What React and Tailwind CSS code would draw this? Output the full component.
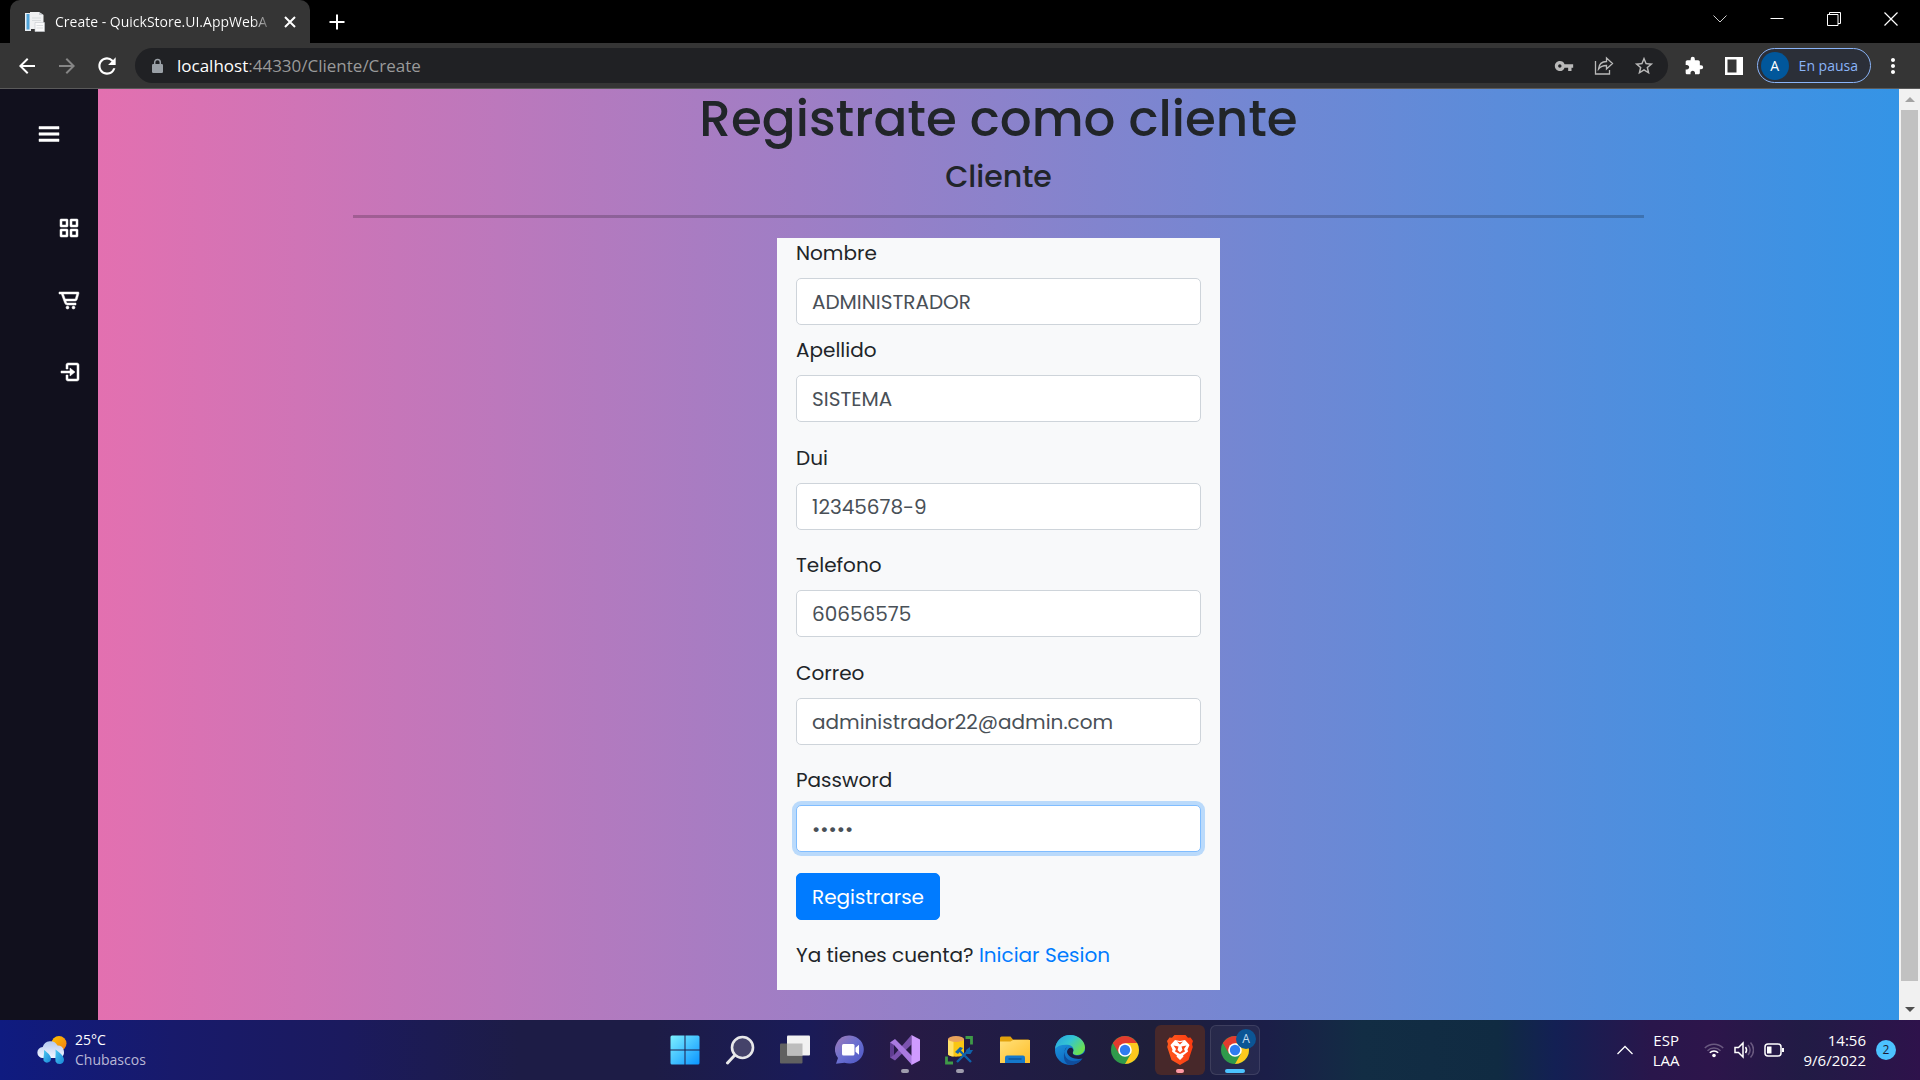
import React from "react";
import { BiMenu, BiGridAlt, BiCartAlt, BiLogIn } from "react-icons/bi";
import {
  MdArrowBack,
  MdArrowForward,
  MdRefresh,
  MdVpnKey,
  MdStarBorder,
  MdExtension,
  MdMoreVert,
} from "react-icons/md";

const SYSTEM_FONT = "font-['Segoe_UI','Open_Sans',sans-serif]";
const PAGE_FONT = "font-['Poppins','Inter',sans-serif]";

/* ---------- Browser chrome ---------- */

function PageFavicon() {
  return (
    <svg viewBox="0 0 20 20" className="size-5 shrink-0" aria-hidden="true">
      <path d="M0 1h6v18H0z" fill="#e8eef3" />
      <path d="M1.500 2h3v15.500h-3z" fill="#4fa3d8" />
      <path d="M5 0h9l4.500 3v14H5z" fill="#f0f1f2" />
      <path d="M14 0v3h4.500z" fill="#c9cdd1" />
      <path d="M10 10.500h9.500v9H10z" fill="#fafafa" stroke="#c4c8cc" strokeWidth=".6" />
      <path d="M11.500 13.500h6.500M11.500 16h6.500M7 6h9M7 8.500h9" stroke="#cfd3d6" strokeWidth=".7" />
    </svg>
  );
}

function TitleBar() {
  return (
    <div className="flex h-[43px] justify-between bg-black pl-2.5">
      <div className="flex">
        <div className="flex w-[300px] items-center rounded-t-[10px] bg-[#353535] pr-2 pl-[15px] text-white">
          <PageFavicon />
          <span className="ml-2.5 min-w-0 flex-1 overflow-hidden bg-linear-to-r from-white from-90% to-transparent bg-clip-text text-sm whitespace-nowrap text-transparent">
            Create - QuickStore.UI.AppWebA
          </span>
          <button type="button" aria-label="Cerrar pestaña" className="ml-1 grid size-6 place-items-center">
            <svg viewBox="0 0 12 12" className="size-3" stroke="currentColor" strokeWidth="2">
              <path d="m1 1 10 10M11 1 1 11" />
            </svg>
          </button>
        </div>
        <button type="button" aria-label="Nueva pestaña" className="ml-[11px] grid w-8 place-items-center text-white">
          <svg viewBox="0 0 16 16" className="size-4" stroke="currentColor" strokeWidth="2">
            <path d="M8 .5v15M.5 8h15" />
          </svg>
        </button>
      </div>
      <div className="flex h-[37px] text-white">
        <button type="button" aria-label="Buscar pestañas" className="grid w-[57px] place-items-center">
          <svg viewBox="0 0 14 8" className="h-2 w-3.5" fill="none" stroke="#ccc">
            <path d="M.5.5 7 7 13.500.5" />
          </svg>
        </button>
        <button type="button" aria-label="Minimizar" className="grid w-[57px] place-items-center">
          <svg viewBox="0 0 14 14" className="size-3.5" stroke="currentColor">
            <path d="M.5 6.500h13" />
          </svg>
        </button>
        <button type="button" aria-label="Restaurar" className="grid w-[57px] place-items-center">
          <svg viewBox="0 0 14 14" className="size-3.5" fill="none" stroke="currentColor">
            <path d="M.5 2.500h10.500v11H.5zM2.500 2.500v-2h11v11H11" />
          </svg>
        </button>
        <button type="button" aria-label="Cerrar" className="grid w-[58px] place-items-center">
          <svg viewBox="0 0 14 14" className="size-3.5" fill="none" stroke="currentColor" strokeWidth="1.200">
            <path d="m.5.5 13 13M13.500.5l-13 13" />
          </svg>
        </button>
      </div>
    </div>
  );
}

function Toolbar() {
  return (
    <div className="flex h-[46px] items-center border-b border-[#5a5a5a] bg-[#353535] pr-[15px] pl-[7px]">
      <button type="button" aria-label="Atrás" className="grid size-10 place-items-center text-white">
        <MdArrowBack className="size-6" />
      </button>
      <button type="button" aria-label="Adelante" className="grid size-10 place-items-center text-[#868686]">
        <MdArrowForward className="size-6" />
      </button>
      <button type="button" aria-label="Recargar" className="grid size-10 place-items-center text-white">
        <MdRefresh className="size-[26px]" />
      </button>
      <div className="ml-2 flex h-[35px] flex-1 items-center rounded-full bg-[#202124] pr-1 pl-3.5 text-[#b9b9b9]">
        <svg viewBox="0 0 16 16" className="mr-3 size-4" aria-hidden="true">
          <rect x="3" y="6" width="11" height="9" rx="1.200" fill="#9aa0a6" />
          <path d="M5.700 6.500V4.300a2.800 2.800 0 0 1 5.600 0v2.200" fill="none" stroke="#9aa0a6" strokeWidth="1.500" />
        </svg>
        <div className="flex-1 text-[17px] text-[#9a9a9a]">
          <span className="text-white">localhost</span>:44330/Cliente/Create
        </div>
        <button type="button" aria-label="Contraseñas" className="grid size-10 place-items-center">
          <MdVpnKey className="size-5" />
        </button>
        <button type="button" aria-label="Compartir" className="grid size-10 place-items-center">
          <svg viewBox="0 0 20 20" className="size-5" fill="none" stroke="currentColor" strokeWidth="1.300">
            <path d="M1.500 5v13h14v-4M4.500 13c.5-4.500 3-7.500 8-7.500V2l6 5.500-6 5.500V9.500C9 9.500 6.500 10.500 4.500 13z" />
          </svg>
        </button>
        <button type="button" aria-label="Añadir a marcadores" className="grid size-10 place-items-center">
          <MdStarBorder className="size-[22px]" />
        </button>
      </div>
      <div className="ml-1.5 flex items-center text-white">
        <button type="button" aria-label="Extensiones" className="grid size-10 place-items-center">
          <MdExtension className="size-5" />
        </button>
        <button type="button" aria-label="Panel lateral" className="grid size-10 place-items-center">
          <svg viewBox="0 0 18 18" className="size-[18px]" fill="currentColor">
            <path fillRule="evenodd" d="M0 0h18v18H0zM2.500 2.500v13h9v-13z" />
          </svg>
        </button>
        <button
          type="button"
          className="ml-[3px] flex h-[35px] items-center rounded-full border border-[#8ab4f8] bg-[#2b2f38] pr-3 pl-[3px] text-sm text-[#8ab4f8]"
        >
          <span className="mr-2.5 grid size-7 place-items-center rounded-full bg-[#01579b] text-white">A</span>
          En pausa
        </button>
        <button type="button" aria-label="Menú" className="ml-2.5 grid w-6 place-items-center">
          <MdMoreVert className="size-6" />
        </button>
      </div>
    </div>
  );
}

/* ---------- Page ---------- */

const NAV_ITEMS = [
  { label: "Inicio", Icon: BiGridAlt },
  { label: "Carrito", Icon: BiCartAlt },
  { label: "Iniciar sesión", Icon: BiLogIn },
];

function Sidebar() {
  return (
    <nav className="flex w-[98px] shrink-0 flex-col bg-[#11101d] text-white">
      <button type="button" aria-label="Abrir menú" className="grid h-[90px] place-items-center">
        <BiMenu className="size-[30px]" stroke="currentColor" strokeWidth=".4" />
      </button>
      <ul className="mt-[13px]">
        {NAV_ITEMS.map(({ label, Icon }) => (
          <li key={label}>
            <a href="#" aria-label={label} className="flex h-[72px] items-center justify-end pr-[17px]">
              <Icon className="size-6" stroke="currentColor" strokeWidth=".5" />
            </a>
          </li>
        ))}
      </ul>
    </nav>
  );
}

const FIELDS = [
  { id: "nombre", label: "Nombre", type: "text", value: "ADMINISTRADOR", gap: "mb-2.5" },
  { id: "apellido", label: "Apellido", type: "text", value: "SISTEMA", gap: "mb-[21px]" },
  { id: "dui", label: "Dui", type: "text", value: "12345678-9", gap: "mb-5" },
  { id: "telefono", label: "Telefono", type: "text", value: "60656575", gap: "mb-[21px]" },
  { id: "correo", label: "Correo", type: "text", value: "administrador22@admin.com", gap: "mb-5" },
  { id: "password", label: "Password", type: "password", value: "admin", gap: "mb-[21px]", active: true },
];

function Field({ id, label, type, value, gap, active }) {
  return (
    <div className={gap}>
      <label htmlFor={id} className="mb-2.5 block leading-[30px]">
        {label}
      </label>
      <input
        id={id}
        type={type}
        defaultValue={value}
        className={
          "block h-[47px] w-full rounded-[5px] border bg-white px-[15px] text-[#495057] outline-none " +
          (active ? "border-[#80bdff] ring-4 ring-[#007bff]/25" : "border-[#ced4da]")
        }
      />
    </div>
  );
}

function RegisterPage() {
  return (
    <main
      className={"min-w-0 flex-1 bg-linear-to-r/srgb from-[#e370b0] to-[#3494e6] text-xl text-[#212529] " + PAGE_FONT}
    >
      <div className="mx-auto w-full max-w-[1291px] text-center">
        <h1 className="mb-2.5 text-[50px] leading-[60px] font-medium">Registrate como cliente</h1>
        <h4 className="text-[30px] leading-9 font-medium">Cliente</h4>
        <hr className="my-5 border-t-[3px] border-black/20" />
      </div>
      <form className="mx-auto w-full max-w-[443px] bg-[#f8f9fa] px-[19px] pb-5" onSubmit={(e) => e.preventDefault()}>
        {FIELDS.map((field) => (
          <Field key={field.id} {...field} />
        ))}
        <button
          type="submit"
          className="h-[47px] rounded-[5px] border border-[#007bff] bg-[#007bff] px-[15px] text-white"
        >
          Registrarse
        </button>
        <p className="mt-5 leading-[30px]">
          Ya tienes cuenta?{" "}
          <a href="#" className="text-[#007bff]">
            Iniciar Sesion
          </a>
        </p>
      </form>
    </main>
  );
}

function ScrollBar() {
  return (
    <div className="flex w-[21px] shrink-0 flex-col bg-[#f1f1f1]" aria-hidden="true">
      <div className="grid h-[21px] place-items-center">
        <svg viewBox="0 0 10 5" className="h-[5px] w-2.5" fill="#a3a3a3">
          <path d="M0 5 5 0l5 5z" />
        </svg>
      </div>
      <div className="mx-0.5 mb-[18px] flex-1 bg-[#c1c1c1]" />
      <div className="grid h-[21px] place-items-center">
        <svg viewBox="0 0 10 5" className="h-[5px] w-2.5" fill="#505050">
          <path d="M0 0h10L5 5z" />
        </svg>
      </div>
    </div>
  );
}

/* ---------- Taskbar icons ---------- */

function WeatherIcon() {
  return (
    <svg viewBox="0 0 30 30" className="size-[30px]" aria-hidden="true">
      <defs>
        <linearGradient id="sun" x1="0" y1="0" x2="1" y2="1">
          <stop offset="0" stopColor="#ffc400" />
          <stop offset="1" stopColor="#f27a12" />
        </linearGradient>
        <linearGradient id="cloud" x1="0" y1="0" x2="0" y2="1">
          <stop offset="0" stopColor="#b4c9f0" />
          <stop offset="1" stopColor="#f3f7ff" />
        </linearGradient>
        <linearGradient id="drop" x1="0" y1="0" x2="1" y2="1">
          <stop offset="0" stopColor="#4cc9f0" />
          <stop offset="1" stopColor="#1887d8" />
        </linearGradient>
      </defs>
      <circle cx="22" cy="8.500" r="7.500" fill="url(#sun)" />
      <path d="M6 23a5.500 5.500 0 0 1-.3-11A8 8 0 0 1 20.500 10.500a6.500 6.500 0 0 1 2.500 12.500z" fill="url(#cloud)" />
      <path d="M7 15c4 3 7 5.500 7 9a4 4 0 0 1-7.500 1.500C6 22 7.500 19 7 15z" fill="url(#drop)" />
      <path d="M18.500 14.500c4.500 3.500 8.500 6.500 8.500 10.500a4.500 4.500 0 0 1-8.500 1.500c-.5-4 .5-8 0-12z" fill="url(#drop)" />
    </svg>
  );
}

function WindowsIcon() {
  return (
    <svg viewBox="0 0 30 30" className="size-[30px]">
      <defs>
        <linearGradient id="win" x1="0" y1="0" x2="1" y2="1">
          <stop offset="0" stopColor="#7df0ff" />
          <stop offset="1" stopColor="#0a94ff" />
        </linearGradient>
      </defs>
      <path
        fill="url(#win)"
        d="M2 .5h12.500V14.500H.5V2A1.500 1.500 0 0 1 2 .5zM15.500.5H28A1.500 1.500 0 0 1 29.500 2v12.500h-14zM.5 15.500h14v14H2A1.500 1.500 0 0 1 .5 28zM15.500 15.500h14V28a1.500 1.500 0 0 1-1.500 1.500H15.500z"
      />
    </svg>
  );
}

function SearchIcon() {
  return (
    <svg viewBox="0 0 30 30" className="size-[30px]" stroke="#e8e8ea" fill="none" strokeLinecap="round">
      <path d="m9.500 20.500-7 7.500" strokeWidth="3" />
      <circle cx="17.500" cy="12.500" r="10.500" strokeWidth="2.600" fill="#45436a" />
    </svg>
  );
}

function TaskViewIcon() {
  return (
    <svg viewBox="0 0 30 30" className="size-[30px]">
      <rect x="0" y="8.500" width="22.500" height="20" rx="1" fill="#616161" />
      <rect x="7" y=".5" width="23" height="20" rx="1" fill="#f2f2f2" />
      <path d="M7 8.500h15.500v12H7z" fill="#bdbdbd" />
    </svg>
  );
}

function ChatIcon() {
  return (
    <svg viewBox="0 0 30 30" className="size-[30px]">
      <defs>
        <linearGradient id="chat" x1="0" y1="0" x2="1" y2="1">
          <stop offset="0" stopColor="#a07ab5" />
          <stop offset=".5" stopColor="#6a6fd0" />
          <stop offset="1" stopColor="#4b55c4" />
        </linearGradient>
      </defs>
      <path d="M15 .5a14.500 14 0 1 1-5.500 27.200L1 28.700l2-5.700A14 14 0 0 1 15 .5z" fill="url(#chat)" />
      <rect x="7" y="9" width="12.500" height="11.500" rx="1.500" fill="#fff" />
      <path d="m20.500 12.800 3.500-3v10l-3.500-3z" fill="#fff" />
    </svg>
  );
}

function VisualStudioIcon() {
  return (
    <svg viewBox="0 0 30 30" className="size-[30px]">
      <path d="M0 7.500v15L4 21V9z" fill="#5f3c91" />
      <path d="M0 22.500 5 25.500 21.500 9.500V0L4 20z" fill="#7b52ae" />
      <path d="M0 7.500 5 4l17 17v9L4 10z" fill="#a97ae0" />
      <path d="M21.500 0 30 4.500v21L21.500 30z" fill="#cf9bff" />
    </svg>
  );
}

function SqlIcon() {
  return (
    <svg viewBox="0 0 30 30" className="size-[30px]">
      <path d="M3 4v15c0 3.500 16 3.500 16 0V4z" fill="#f9c613" />
      <path d="M3 4v15c0 1.300 2.500 2.200 5.500 2.500V5z" fill="#ffe06a" />
      <ellipse cx="11" cy="4" rx="8" ry="3" fill="#e8a25c" />
      <path d="M20.500 2.500h6v7M1.500 21.500v6.500H8" fill="none" stroke="#3f9a48" strokeWidth="2.800" />
      <path d="m12 27 12-12M26 27 14 15" stroke="#0f62ab" strokeWidth="2.400" fill="none" />
      <path d="m10 17 5-5 3 1-5 6zM21 15l4-3v3l3 0-2.500 4-3.500 0z" fill="#0f62ab" />
    </svg>
  );
}

function FolderIcon() {
  return (
    <svg viewBox="0 0 30 30" className="size-[30px]">
      <defs>
        <linearGradient id="folder" x1="0" y1="0" x2="1" y2="1">
          <stop offset="0" stopColor="#ffe07a" />
          <stop offset="1" stopColor="#ffbe28" />
        </linearGradient>
      </defs>
      <path d="M0 3a1.500 1.500 0 0 1 1.500-1.500h9L13 4.500h15A1.500 1.500 0 0 1 29.500 6v4H0z" fill="#e2a20c" />
      <path d="M0 6.500h10.500l2.500-1.500h17v23H0z" fill="url(#folder)" />
      <path d="M5 28v-5.500a2 2 0 0 1 2-2h16a2 2 0 0 1 2 2V28z" fill="#1578cc" />
      <path d="M8.500 24h13" stroke="#0b4f93" strokeWidth="1.300" />
    </svg>
  );
}

function EdgeIcon() {
  return (
    <svg viewBox="0 0 30 30" className="size-[30px]">
      <defs>
        <linearGradient id="edge-top" x1="0" y1="0" x2="1" y2=".6">
          <stop offset="0" stopColor="#2a9fe0" />
          <stop offset=".5" stopColor="#33c5d4" />
          <stop offset="1" stopColor="#6ce04e" />
        </linearGradient>
        <linearGradient id="edge-body" x1="0" y1="0" x2=".6" y2="1">
          <stop offset="0" stopColor="#1fa0e4" />
          <stop offset="1" stopColor="#0d62bd" />
        </linearGradient>
      </defs>
      <circle cx="15" cy="15" r="15" fill="url(#edge-body)" />
      <path d="M0 14C1 5.500 7.500 0 15 0c8.500 0 15 6 15 12.500 0 4.500-3.500 7.500-7.500 7.500-3.500 0-5.500-1.300-4.500-3 1.800-3.500-1-7-5.500-7.200C6.500 9.500 2 11 0 14z" fill="url(#edge-top)" />
      <path d="M12 12c-4.500 3-2.500 11.500 3 13.500 4.500 1.500 9 .5 12.500-2C24 28.500 19 30 15 30 8 29 7 18 12 12z" fill="#104d9c" />
      <path d="M18 17c-1 2 1.500 4 5.500 3.500 3.500-.5 6-2.500 6.500-4.500V23l-2.300.5C22 25 13 23 12 17c0-3 4-6 6-3 .5 1 .5 2 0 3z" fill="#1d1c42" />
    </svg>
  );
}

function ChromeIcon() {
  return (
    <svg viewBox="0 0 28 28" className="size-7">
      <circle cx="14" cy="14" r="14" fill="#2f9a4b" />
      <path d="M14 14 1.880 7A14 14 0 0 1 26.120 7z" fill="#e33b2e" />
      <path d="M14 7h12.120A14 14 0 0 1 14 28l6-10.500z" fill="#fdc81e" />
      <path d="M1.880 7 8 17.500 14 7z" fill="#e33b2e" />
      <circle cx="14" cy="14" r="6.800" fill="#fff" />
      <circle cx="14" cy="14" r="5.200" fill="#2e7cf0" />
    </svg>
  );
}

function BraveIcon() {
  return (
    <svg viewBox="0 0 26 30" className="h-[30px] w-[26px]">
      <defs>
        <linearGradient id="brave" x1="0" y1="0" x2="1" y2="0">
          <stop offset="0" stopColor="#ff5a1f" />
          <stop offset="1" stopColor="#fb3a10" />
        </linearGradient>
      </defs>
      <path d="M7.500 0h11l2.500 2.800 2.500-.3L26 6l-1 3 .8 3-4.300 13L13 30l-8.500-5L.2 12 1 9 0 6l2.500-3.500 2.500.3z" fill="url(#brave)" />
      <path d="m8 5 5 1 5-1 4.500 5-2 4.500.5 2-5 4 .5 1L13 25l-3.500-3.500.5-1-5-4 .5-2L3.500 10z" fill="#fff" />
      <path d="m6.500 10.500 5 1-1 3.500 2.500 2.500 2.500-2.500-1-3.500 5-1-2.500 3.500 1 2.500-3 1.500-2 1-2-1-3-1.500 1-2.500zM10 6.500l3 3 3-3-3 .8z" fill="#f9481a" />
    </svg>
  );
}

const TASKBAR_APPS = [
  { label: "Inicio", Icon: WindowsIcon },
  { label: "Buscar", Icon: SearchIcon },
  { label: "Vista de tareas", Icon: TaskViewIcon },
  { label: "Chat", Icon: ChatIcon },
  { label: "Visual Studio", Icon: VisualStudioIcon, marker: "w-2 bg-[#9f9cad]" },
  { label: "SQL Server Management Studio", Icon: SqlIcon, marker: "w-2 bg-[#9f9cad]" },
  { label: "Explorador de archivos", Icon: FolderIcon },
  { label: "Microsoft Edge", Icon: EdgeIcon },
  { label: "Google Chrome", Icon: ChromeIcon },
  { label: "Brave", Icon: BraveIcon, tile: "bg-[#47282a]", marker: "w-2 bg-[#ff99a4]" },
  {
    label: "Google Chrome: A",
    Icon: ChromeIcon,
    tile: "bg-white/5 ring-1 ring-inset ring-white/10",
    marker: "w-5 bg-[#4cc2ff]",
    badge: "A",
  },
];

function Taskbar() {
  return (
    <footer
      className={
        "grid h-[60px] grid-cols-[1fr_auto_1fr] items-center bg-[linear-gradient(90deg,#0f1b80_0%,#181a6b_9%,#1b1a5e_18%,#1d1c46_27%,#1d1c46_34%,#1a1b58_42%,#271a45_47%,#201c44_53%,#1e1e3a_60%,#1b1e48_66%,#122d44_71%,#102b42_78%,#132054_81%,#29164b_86%,#2d154b_89%,#211b45_94%,#2e124b_100%)] text-white " +
        SYSTEM_FONT
      }
    >
      <button type="button" className="flex items-center gap-2 justify-self-start pl-[37px] text-left text-sm leading-5">
        <WeatherIcon />
        <span>
          25°C
          <span className="block text-[#b9b8d6]">Chubascos</span>
        </span>
      </button>
      <div className="flex gap-[5px]">
        {TASKBAR_APPS.map(({ label, Icon, tile = "", marker, badge }) => (
          <button
            key={label}
            type="button"
            aria-label={label}
            className={"relative grid size-[50px] place-items-center rounded-md " + tile}
          >
            <Icon />
            {badge && (
              <span className="absolute top-1 right-1 grid size-5 place-items-center rounded-full bg-[#0b5595] text-xs text-[#c4dcf0]">
                {badge}
              </span>
            )}
            {marker && <span className={"absolute bottom-0.5 h-1 rounded-full " + marker} />}
          </button>
        ))}
      </div>
      <div className="flex items-center justify-self-end pr-6 text-[15px] leading-5">
        <button type="button" aria-label="Mostrar iconos ocultos" className="mr-5">
          <svg viewBox="0 0 16 10" className="h-2.5 w-4" fill="none" stroke="currentColor" strokeWidth="1.300">
            <path d="m.5 9 7.500-7.500L15.500 9" />
          </svg>
        </button>
        <button type="button" className="mr-6 text-center">
          ESP
          <br />
          LAA
        </button>
        <button type="button" aria-label="Red, volumen y batería" className="mr-5 flex items-center gap-2.5">
          <svg viewBox="0 0 20 16" className="h-4 w-5" fill="none" strokeWidth="1.500">
            <path d="M.8 6a13 13 0 0 1 18.400 0M3.500 8.700a9.200 9.200 0 0 1 13 0" stroke="#6a5a80" />
            <path d="M5.800 10.800a6 6 0 0 1 8.400 0" stroke="#fff" />
            <circle cx="10" cy="13.500" r="1.800" fill="#fff" />
          </svg>
          <svg viewBox="0 0 20 18" className="h-[18px] w-5" fill="none" stroke="#fff" strokeWidth="1.500">
            <path d="M1 6.500v5h3.500L9 16V2L4.500 6.500zM11.500 6c1.300 1.800 1.300 4.200 0 6" />
            <path d="M14 4c2.500 3 2.500 7 0 10M16.500 1.500c4 4.500 4 10.500 0 15" stroke="#6a5a80" />
          </svg>
          <svg viewBox="0 0 20 14" className="h-3.5 w-5" fill="none" stroke="#fff" strokeWidth="1.500">
            <rect x="1" y="1" width="16" height="12" rx="3" />
            <path d="M3 3.500h4.500v7H3z" fill="#fff" stroke="none" />
            <path d="M19 5v4" strokeWidth="2" />
          </svg>
        </button>
        <button type="button" className="flex items-center gap-2.5 text-right">
          <span>
            14:56
            <br />
            9/6/2022
          </span>
          <span className="grid size-5 place-items-center rounded-full bg-[#4cc2ff] text-xs text-[#1b1a33]">2</span>
        </button>
      </div>
    </footer>
  );
}

export default function App() {
  return (
    <div className="flex h-screen flex-col overflow-hidden">
      <header className={SYSTEM_FONT}>
        <TitleBar />
        <Toolbar />
      </header>
      <div className="flex min-h-0 flex-1">
        <Sidebar />
        <RegisterPage />
        <ScrollBar />
      </div>
      <Taskbar />
    </div>
  );
}
